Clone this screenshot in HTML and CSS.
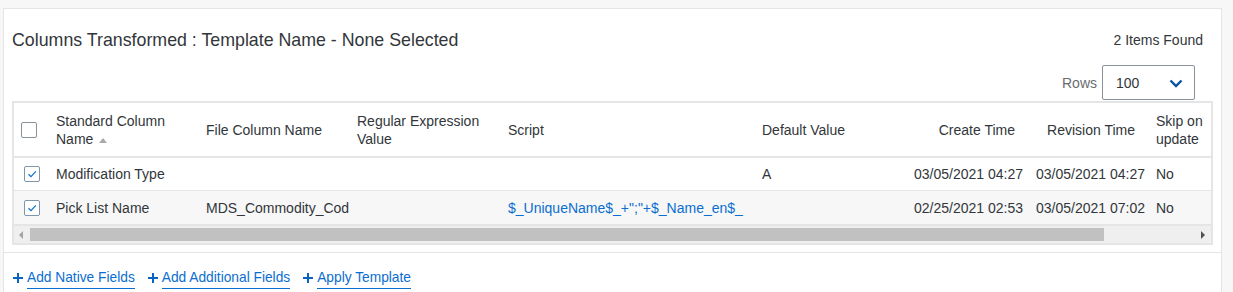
FILE: index.html
```html
<!DOCTYPE html>
<html lang="en">
<head>
  <meta charset="UTF-8">
  <title>Columns Transformed</title>
  <link rel="stylesheet" href="styles.css">
</head>
<body>
  <div class="panel">
    <!-- Title row -->
    <div class="head">
      <div class="title">Columns Transformed : Template Name - None Selected</div>
      <div class="count">2 Items Found</div>
    </div>

    <!-- Rows per page -->
    <div class="toolbar">
      <span class="rows-label">Rows</span>
      <div class="select">
        <span>100</span>
        <svg class="chev" width="14" height="9" viewBox="0 0 14 9"><path d="M1.5 1.5 L7 7 L12.5 1.5" fill="none" stroke="#0854a0" stroke-width="2.4"/></svg>
      </div>
    </div>

    <!-- Table -->
    <div class="table-box">
      <table class="grid">
        <colgroup>
          <col style="width:34px">
          <col style="width:150px">
          <col style="width:151px">
          <col style="width:151px">
          <col style="width:254px">
          <col style="width:152px">
          <col style="width:121px">
          <col style="width:121px">
          <col style="width:92px">
        </colgroup>
        <thead>
          <tr>
            <th><span class="chk chk-head"></span></th>
            <th>Standard Column<br>Name <span class="sort"></span></th>
            <th>File Column Name</th>
            <th>Regular Expression<br>Value</th>
            <th>Script</th>
            <th>Default Value</th>
            <th class="th-create">Create Time</th>
            <th class="th-rev">Revision Time</th>
            <th>Skip on<br>update</th>
          </tr>
        </thead>
        <tbody>
          <tr>
            <td><span class="chk chk-row"><svg width="12" height="12" viewBox="0 0 12 12"><path d="M2.5 6.2 L5 8.6 L9.8 3.4" fill="none" stroke="#0a6ed1" stroke-width="1.2"/></svg></span></td>
            <td>Modification Type</td>
            <td></td>
            <td></td>
            <td></td>
            <td>A</td>
            <td class="td-create">03/05/2021 04:27</td>
            <td class="td-rev">03/05/2021 04:27</td>
            <td>No</td>
          </tr>
          <tr class="alt">
            <td><span class="chk chk-row"><svg width="12" height="12" viewBox="0 0 12 12"><path d="M2.5 6.2 L5 8.6 L9.8 3.4" fill="none" stroke="#0a6ed1" stroke-width="1.2"/></svg></span></td>
            <td>Pick List Name</td>
            <td>MDS_Commodity_Code</td>
            <td></td>
            <td class="script">$_UniqueName$_+";"+$_Name_en$_</td>
            <td></td>
            <td class="td-create">02/25/2021 02:53</td>
            <td class="td-rev">03/05/2021 07:02</td>
            <td>No</td>
          </tr>
        </tbody>
      </table>

      <!-- Horizontal scrollbar -->
      <div class="hscroll">
        <span class="arrow-left"></span>
        <span class="thumb"></span>
        <span class="arrow-right"></span>
      </div>
    </div>

    <!-- Footer actions -->
    <div class="footer">
      <a class="action"><svg class="plus" width="10" height="10" viewBox="0 0 10 10"><rect x="4" y="0" width="2" height="10" fill="#0b63c1"/><rect x="0" y="4" width="10" height="2" fill="#0b63c1"/></svg><span>Add Native Fields</span></a>
      <a class="action"><svg class="plus" width="10" height="10" viewBox="0 0 10 10"><rect x="4" y="0" width="2" height="10" fill="#0b63c1"/><rect x="0" y="4" width="10" height="2" fill="#0b63c1"/></svg><span>Add Additional Fields</span></a>
      <a class="action"><svg class="plus" width="10" height="10" viewBox="0 0 10 10"><rect x="4" y="0" width="2" height="10" fill="#0b63c1"/><rect x="0" y="4" width="10" height="2" fill="#0b63c1"/></svg><span>Apply Template</span></a>
    </div>
  </div>
</body>
</html>
```

FILE: styles.css
```css
body {
  margin: 0;
  padding: 8px 0 0 3px;
  background: #f7f7f7;
  font-family: "Liberation Sans", Arial, sans-serif;
  font-size: 14px;
  color: #32363a;
  overflow: hidden;
}

.panel {
  width: 1219px;
  box-sizing: border-box;
  height: 290px;
  background: #fff;
  border: 1px solid #e5e5e5;
  border-bottom: none;
  padding: 0 8px;
}

.head {
  display: flex;
  justify-content: space-between;
  align-items: flex-start;
  padding-top: 19px;
}

.title {
  font-size: 17.8px;
  line-height: 24px;
}

.count {
  line-height: 20px;
  margin-top: 2px;
  margin-right: 10px;
}

.toolbar {
  display: flex;
  justify-content: flex-end;
  align-items: center;
  margin-top: 13px;
  margin-right: 18px;
}

.rows-label {
  color: #6a6d70;
  margin-right: 5px;
}

.select {
  width: 93px;
  height: 35px;
  box-sizing: border-box;
  border: 1px solid #89919a;
  border-radius: 2px;
  display: flex;
  align-items: center;
  justify-content: space-between;
  padding: 0 11px 0 13px;
}

.chev {
  display: block;
  margin-top: 2px;
}

.table-box {
  margin-top: 1px;
  border: 2px solid #e5e5e5;
  overflow: hidden;
}

.grid {
  table-layout: fixed;
  width: 1226px;
  border-collapse: separate;
  border-spacing: 0;
}

.grid th {
  font-weight: normal;
  text-align: left;
  line-height: 18px;
  height: 55px;
  padding: 0 8px;
  border-bottom: 2px solid #e5e5e5;
  vertical-align: middle;
  box-sizing: border-box;
}

.grid td {
  height: 33px;
  padding: 0 8px;
  white-space: nowrap;
  overflow: hidden;
  border-bottom: 1px solid #e5e5e5;
  box-sizing: border-box;
  vertical-align: middle;
}

.grid tr.alt td {
  height: 34px;
  background: #f7f7f7;
}

.grid th:first-child,
.grid td:first-child {
  padding: 0;
}

.th-create {
  text-align: right !important;
  padding-right: 12px !important;
}

.th-rev {
  text-align: right !important;
  padding-right: 13px !important;
}

.td-create {
  text-align: right;
  padding-right: 4px !important;
}

.td-rev {
  padding-left: 9px !important;
}

.script {
  color: #0a6ed1;
}

.chk {
  display: block;
  width: 16px;
  height: 16px;
  box-sizing: border-box;
  border: 1px solid #89919a;
  border-radius: 2px;
  background: #fff;
}

.chk-head {
  margin-left: 7px;
}

.chk-row {
  margin-left: 10px;
  border-color: #7f95ab;
}

.chk-row svg {
  display: block;
  margin: 1px;
}

.sort {
  display: inline-block;
  width: 0;
  height: 0;
  border-left: 4px solid transparent;
  border-right: 4px solid transparent;
  border-bottom: 5px solid #a9a9a9;
  margin-left: 2px;
  vertical-align: 1px;
}

.hscroll {
  height: 17px;
  background: #efefef;
  display: flex;
  align-items: center;
  border-top: 1px solid #e5e5e5;
}

.arrow-left {
  width: 0;
  height: 0;
  border-top: 4px solid transparent;
  border-bottom: 4px solid transparent;
  border-right: 4px solid #a3a3a3;
  margin-left: 5px;
  margin-right: 7px;
}

.thumb {
  width: 1074px;
  height: 13px;
  background: #c1c1c1;
}

.arrow-right {
  width: 0;
  height: 0;
  border-top: 4px solid transparent;
  border-bottom: 4px solid transparent;
  border-left: 4px solid #505050;
  margin-left: auto;
  margin-right: 6px;
}

.footer {
  margin: 7px -8px 0;
  border-top: 1px solid #e5e5e5;
  padding: 16px 0 0 9px;
  display: flex;
  gap: 13px;
}

.action {
  display: flex;
  align-items: center;
  color: #0a6ed1;
  font-size: 13.75px;
  line-height: 20px;
  cursor: pointer;
}

.plus {
  display: block;
  margin-right: 4px;
  margin-top: -2px;
}

.action span {
  border-bottom: 1px solid #0a6ed1;
  line-height: 18px;
  padding-bottom: 1px;
}
```
